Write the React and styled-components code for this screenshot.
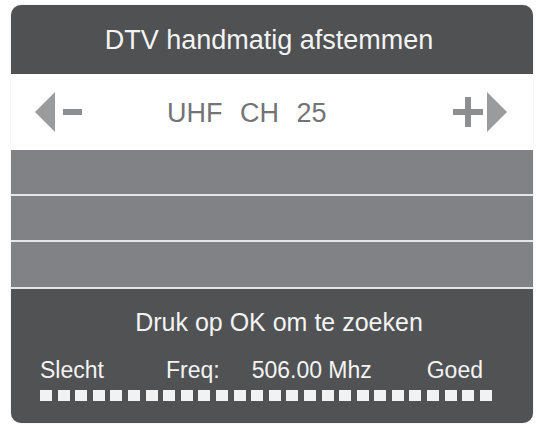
import React from "react";
import styled, { createGlobalStyle } from "styled-components";

const GlobalStyle = createGlobalStyle`
  html, body {
    margin: 0;
    padding: 0;
    background: #ffffff;
  }
  body {
    font-family: "Liberation Sans", Arial, sans-serif;
  }
`;

const Screen = styled.div`
  width: 540px;
  height: 426px;
  padding: 5px 0 0 11px;
  box-sizing: border-box;
`;

const Panel = styled.div`
  width: 522px;
  height: 418px;
  border-radius: 10px;
  overflow: hidden;
  display: flex;
  flex-direction: column;
  background: #e4e5e6;
  box-shadow: 0 0 1px rgba(0, 0, 0, 0.35);
`;

const Header = styled.div`
  height: 69px;
  flex: none;
  display: flex;
  align-items: center;
  justify-content: center;
  background: #4f5153;
  color: #f4f4f4;
  font-size: 27px;
  padding: 2px 6px 0 0;
  box-sizing: border-box;
`;

const ChannelRow = styled.div`
  height: 76px;
  flex: none;
  display: flex;
  align-items: center;
  background: #ffffff;
  padding: 0 26px 0 24px;
  box-sizing: border-box;
`;

const Control = styled.div`
  display: flex;
  align-items: center;
  gap: ${(p) => p.$gap}px;
  margin-left: ${(p) => (p.$end ? "auto" : "0")};
`;

const ChannelText = styled.div`
  margin-left: 85px;
  font-size: 27px;
  color: #727476;
  word-spacing: 10px;
  padding-top: 2px;
`;

const BlankRow = styled.div`
  height: ${(p) => p.$h}px;
  flex: none;
  background: #808285;
  margin-bottom: 2px;
`;

const Footer = styled.div`
  flex: 1;
  background: #505254;
  color: #f4f4f4;
  display: flex;
  flex-direction: column;
  padding: 19px 41px 0 29px;
`;

const Prompt = styled.div`
  text-align: center;
  font-size: 25px;
  line-height: 28px;
  padding-left: 26px;
`;

const InfoRow = styled.div`
  display: flex;
  align-items: baseline;
  font-size: 23px;
  line-height: 26px;
  margin-top: 21px;
  padding-right: 9px;
`;

const Label = styled.span`
  margin-left: ${(p) => p.$ml || 0}px;
  margin-right: ${(p) => (p.$push ? "auto" : "0")};
`;

const Meter = styled.div`
  display: flex;
  justify-content: space-between;
  margin-top: 7px;
`;

const Cell = styled.span`
  width: 12px;
  height: 11px;
  background: #f2f2f2;
`;

const ArrowLeft = () => (
  <svg width="20" height="40" viewBox="0 0 20 40">
    <polygon points="20,0 20,40 0,20" fill="#9a9b9c" />
  </svg>
);

const ArrowRight = () => (
  <svg width="20" height="40" viewBox="0 0 20 40">
    <polygon points="0,0 0,40 20,20" fill="#9a9b9c" />
  </svg>
);

const Minus = () => (
  <svg width="19" height="6" viewBox="0 0 19 6">
    <rect x="0" y="0" width="19" height="6" fill="#8d8e90" />
  </svg>
);

const Plus = () => (
  <svg width="30" height="30" viewBox="0 0 30 30">
    <rect x="0" y="12" width="30" height="6" fill="#8d8e90" />
    <rect x="12" y="0" width="6" height="30" fill="#8d8e90" />
  </svg>
);

const cells = Array.from({ length: 26 }, (_, i) => i);

const App = () => {
  return (
    <Screen>
      <GlobalStyle />
      <Panel>
        <Header>DTV handmatig afstemmen</Header>
        <ChannelRow>
          <Control $gap={8}>
            <ArrowLeft />
            <Minus />
          </Control>
          <ChannelText>UHF CH 25</ChannelText>
          <Control $gap={4} $end>
            <Plus />
            <ArrowRight />
          </Control>
        </ChannelRow>
        <BlankRow $h={44} />
        <BlankRow $h={44} />
        <BlankRow $h={45} />
        <Footer>
          <Prompt>Druk op OK om te zoeken</Prompt>
          <InfoRow>
            <Label>Slecht</Label>
            <Label $ml={62}>Freq:</Label>
            <Label $ml={32} $push>506.00 Mhz</Label>
            <Label>Goed</Label>
          </InfoRow>
          <Meter>
            {cells.map((i) => (
              <Cell key={i} />
            ))}
          </Meter>
        </Footer>
      </Panel>
    </Screen>
  );
};

export default App;
